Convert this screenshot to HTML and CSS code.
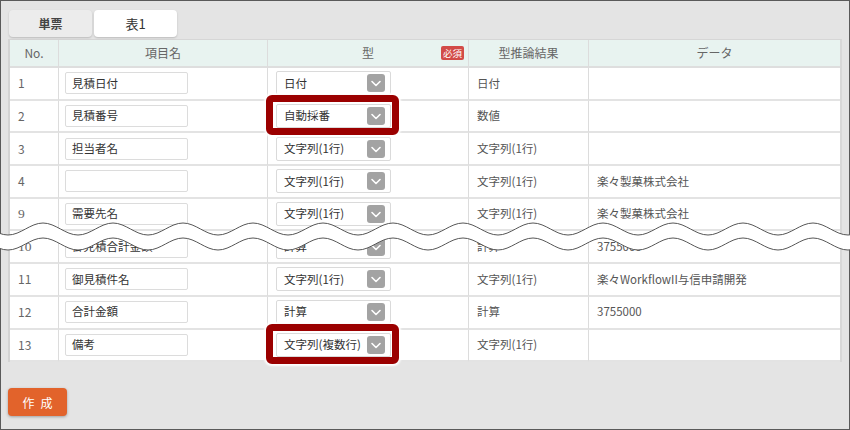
FILE: index.html
```html
<!DOCTYPE html>
<html lang="ja">
<head>
<meta charset="utf-8">
<link rel="stylesheet" href="styles.css">
</head>
<body>
<div class="screen">
  <div class="tabs">
    <div class="tab tab-off">単票</div>
    <div class="tab tab-on">表1</div>
  </div>
  <table class="grid">
    <colgroup>
      <col class="c-no"><col class="c-name"><col class="c-type"><col class="c-res"><col class="c-data">
    </colgroup>
    <thead>
      <tr><th>No.</th><th>項目名</th><th class="th-type">型<span class="req">必須</span></th><th>型推論結果</th><th>データ</th></tr>
    </thead>
    <tbody>
      <tr><td class="no">1</td><td><div class="inp">見積日付</div></td><td><div class="sel"><span>日付</span><span class="arr"><svg viewBox="0 0 18 18"><path d="M5 7.5l4 4 4-4"/></svg></span></div></td><td>日付</td><td></td></tr>
      <tr><td class="no">2</td><td><div class="inp">見積番号</div></td><td><div class="selwrap"><div class="sel"><span>自動採番</span><span class="arr"><svg viewBox="0 0 18 18"><path d="M5 7.5l4 4 4-4"/></svg></span></div><span class="mark"></span></div></td><td>数値</td><td></td></tr>
      <tr><td class="no">3</td><td><div class="inp">担当者名</div></td><td><div class="sel"><span>文字列(1行)</span><span class="arr"><svg viewBox="0 0 18 18"><path d="M5 7.5l4 4 4-4"/></svg></span></div></td><td>文字列(1行)</td><td></td></tr>
      <tr><td class="no">4</td><td><div class="inp"></div></td><td><div class="sel"><span>文字列(1行)</span><span class="arr"><svg viewBox="0 0 18 18"><path d="M5 7.5l4 4 4-4"/></svg></span></div></td><td>文字列(1行)</td><td>楽々製菓株式会社</td></tr>
      <tr><td class="no serif">9</td><td><div class="inp">需要先名</div></td><td><div class="sel"><span>文字列(1行)</span><span class="arr"><svg viewBox="0 0 18 18"><path d="M5 7.5l4 4 4-4"/></svg></span></div></td><td>文字列(1行)</td><td>楽々製菓株式会社</td></tr>
      <tr><td class="no serif">10</td><td><div class="inp">御見積合計金額</div></td><td><div class="sel"><span>計算</span><span class="arr"><svg viewBox="0 0 18 18"><path d="M5 7.5l4 4 4-4"/></svg></span></div></td><td>計算</td><td>3755000</td></tr>
      <tr><td class="no">11</td><td><div class="inp">御見積件名</div></td><td><div class="sel"><span>文字列(1行)</span><span class="arr"><svg viewBox="0 0 18 18"><path d="M5 7.5l4 4 4-4"/></svg></span></div></td><td>文字列(1行)</td><td>楽々WorkflowII与信申請開発</td></tr>
      <tr><td class="no">12</td><td><div class="inp">合計金額</div></td><td><div class="sel"><span>計算</span><span class="arr"><svg viewBox="0 0 18 18"><path d="M5 7.5l4 4 4-4"/></svg></span></div></td><td>計算</td><td>3755000</td></tr>
      <tr><td class="no">13</td><td><div class="inp">備考</div></td><td><div class="selwrap"><div class="sel"><span>文字列(複数行)</span><span class="arr"><svg viewBox="0 0 18 18"><path d="M5 7.5l4 4 4-4"/></svg></span></div><span class="mark"></span></div></td><td>文字列(1行)</td><td></td></tr>
    </tbody>
  </table>
  <button class="create">作 成</button>
  <svg class="wave" width="850" height="40" viewBox="0 0 850 40">
    <defs>
      <pattern id="wv" patternUnits="userSpaceOnUse" x="43" y="0" width="70" height="40">
        <path d="M0 5 C12.7 5 22.3 17 35 17 S57.3 5 70 5 L70 20 C57.3 20 47.7 32 35 32 S12.7 20 0 20 Z" fill="#fff"/>
        <path d="M-1 5 L0 5 C12.7 5 22.3 17 35 17 S57.3 5 70 5 L71 5" fill="none" stroke="#555" stroke-width="1"/>
        <path d="M-1 20 L0 20 C12.7 20 22.3 32 35 32 S57.3 20 70 20 L71 20" fill="none" stroke="#555" stroke-width="1"/>
      </pattern>
    </defs>
    <rect x="0" y="0" width="850" height="40" fill="url(#wv)"/>
  </svg>
</div>
</body>
</html>
```

FILE: styles.css
```css
* { box-sizing: border-box; }
html, body { margin: 0; padding: 0; }
body { width: 850px; height: 430px; overflow: hidden; font-family: "Noto Sans CJK JP", "Noto Sans", sans-serif; }

.screen {
  position: relative;
  width: 850px;
  height: 430px;
  border: 1px solid #5a5a5a;
  background: #e4e4e4;
  padding: 9px 0 0 7px;
}

.tabs { display: flex; gap: 2px; padding-left: 1px; height: 27px; margin-bottom: 2px; }
.tab {
  width: 83px;
  height: 27px;
  border-radius: 4px;
  display: flex;
  align-items: center;
  justify-content: center;
  font-size: 12px;
  color: #333;
  box-shadow: 0 1px 2px rgba(0,0,0,0.18);
}
.tab-off { background: #ececec; font-weight: bold; color: #444; }
.tab-on { background: #fff; font-size: 13px; }

.grid {
  width: 832px;
  border-collapse: separate;
  border-spacing: 0;
  table-layout: fixed;
  background: #fff;
  border-top: 1px solid #d6d6d6;
  border-left: 2px solid #d4d4d4;
  border-right: 2px solid #d8d8d8;
}
.c-no { width: 48px; }
.c-name { width: 209px; }
.c-type { width: 201px; }
.c-res { width: 120px; }
.c-data { width: 252px; }

.grid th {
  height: 28px;
  background: #e8f3f0;
  color: #666;
  font-weight: normal;
  font-size: 12px;
  text-align: center;
  border-bottom: 2px solid #dedede;
  border-left: 1px solid #dcdcdc;
  padding: 0;
  line-height: 1;
}
.grid th:first-child, .grid td:first-child { border-left: none; }
.th-type { position: relative; }
.req {
  position: absolute;
  right: 4px;
  top: 6px;
  width: 23px;
  height: 14px;
  background: #d24b48;
  color: #fff;
  font-size: 9.5px;
  line-height: 14px;
  text-align: center;
  border-radius: 2px;
}

.grid td {
  height: 32.7px;
  padding: 0 0 0 8px;
  border-bottom: 2px solid #e3e3e3;
  border-left: 1px solid #dcdcdc;
  font-size: 11.5px;
  color: #555;
  line-height: 1;
  vertical-align: middle;
  white-space: nowrap;
}
.grid td.no { padding-left: 8px; font-size: 12px; color: #666; }
.grid td.serif { font-family: "Liberation Serif", serif; font-size: 13.5px; }
.grid td:nth-child(2) { padding-left: 6px; }

.inp {
  width: 123px;
  height: 22px;
  border: 1px solid #dcdcdc;
  border-radius: 2px;
  background: #fff;
  padding-left: 6px;
  display: flex;
  align-items: center;
  font-size: 11.5px;
  color: #333;
}

.selwrap { position: relative; width: 115px; }
.sel {
  width: 115px;
  height: 24px;
  border: 1px solid #dadada;
  border-radius: 2px;
  background: #fff;
  padding: 0 5px 0 7px;
  display: flex;
  align-items: center;
  justify-content: space-between;
  font-size: 11.5px;
  color: #333;
}
.arr {
  width: 18px;
  height: 18px;
  border-radius: 3px;
  background: #a3a3a3;
  display: flex;
}
.arr svg { width: 18px; height: 18px; }
.arr path { fill: none; stroke: #fff; stroke-width: 1.6; stroke-linecap: round; stroke-linejoin: round; }

.mark {
  position: absolute;
  left: -10px;
  right: -8px;
  top: -9px;
  bottom: -7px;
  border: 7px solid #9b0000;
  border-radius: 6px;
  box-shadow: 0 0 2px 2px rgba(255,255,255,0.95);
}

.create {
  display: block;
  margin-top: 26px;
  margin-left: 0;
  width: 59px;
  height: 28px;
  border: none;
  border-radius: 4px;
  background: #e2632b;
  color: #fff;
  font-family: "Noto Sans CJK JP", sans-serif;
  font-size: 12px;
  word-spacing: 3.5px;
  padding: 0;
  box-shadow: 0 1px 3px rgba(0,0,0,0.3);
}

.wave {
  position: absolute;
  left: -1px;
  top: 217px;
  display: block;
}
```
